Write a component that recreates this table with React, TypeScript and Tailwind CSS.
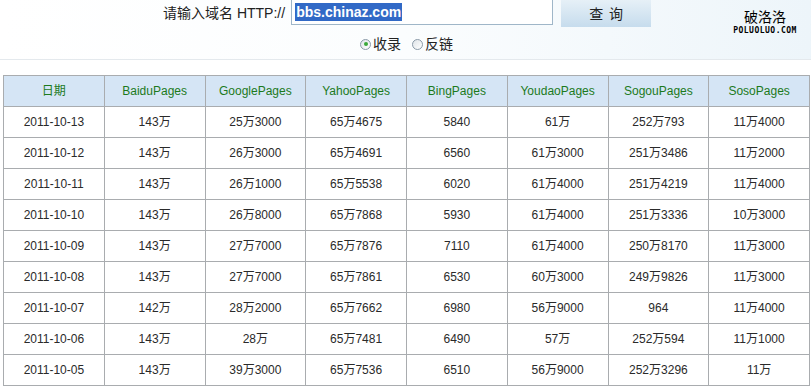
import React from "react";

const headers = ["日期", "BaiduPages", "GooglePages", "YahooPages", "BingPages", "YoudaoPages", "SogouPages", "SosoPages"];

const rows: string[][] = [
  ["2011-10-13", "143万", "25万3000", "65万4675", "5840", "61万", "252万793", "11万4000"],
  ["2011-10-12", "143万", "26万3000", "65万4691", "6560", "61万3000", "251万3486", "11万2000"],
  ["2011-10-11", "143万", "26万1000", "65万5538", "6020", "61万4000", "251万4219", "11万4000"],
  ["2011-10-10", "143万", "26万8000", "65万7868", "5930", "61万4000", "251万3336", "10万3000"],
  ["2011-10-09", "143万", "27万7000", "65万7876", "7110", "61万4000", "250万8170", "11万3000"],
  ["2011-10-08", "143万", "27万7000", "65万7861", "6530", "60万3000", "249万9826", "11万3000"],
  ["2011-10-07", "142万", "28万2000", "65万7662", "6980", "56万9000", "964", "11万4000"],
  ["2011-10-06", "143万", "28万", "65万7481", "6490", "57万", "252万594", "11万1000"],
  ["2011-10-05", "143万", "39万3000", "65万7536", "6510", "56万9000", "252万3296", "11万"],
];

const Radio = ({ checked }: { checked?: boolean }) => (
  <span className="w-[11px] h-[11px] rounded-full border border-[#8a9aa8] bg-gradient-to-br from-[#dfe4e8] to-white flex items-center justify-center">
    {checked && <span className="w-[4px] h-[4px] rounded-full bg-[#3aa83a]" />}
  </span>
);

const App = () => {
  return (
    <div
      className="w-[811px] h-[386px] bg-white overflow-hidden text-[#222]"
      style={{ fontFamily: '"Liberation Sans", "Noto Sans CJK SC", sans-serif' }}
    >
      <div className="h-[60px] border-b border-[#e4e9ed] bg-gradient-to-r from-white via-[#fbfdfe] to-[#edf5fa]">
        <div className="flex items-start">
          <span className="ml-[163px] mt-[4px] text-[14px] leading-[18px] text-[#222]">请输入域名 HTTP://</span>
          <div className="ml-[6px] w-[262px] h-[25px] border border-[#9fb6c8] border-t-0 bg-white flex items-center pl-[3px]">
            <span
              className="bg-[#3169c6] text-white font-bold text-[14px] leading-[18px] px-[1px]"
              style={{ fontFamily: '"Liberation Sans", sans-serif' }}
            >
              bbs.chinaz.com
            </span>
          </div>
          <button className="ml-[8px] w-[90px] h-[27px] bg-gradient-to-b from-[#e6f0f7] to-[#c6dced] text-[14px] leading-[18px] tracking-[6px] pl-[6px] text-[#222]">
            查询
          </button>
          <div className="ml-[82px] mt-[10px] flex flex-col items-center">
            <span className="text-[14px] leading-[15px] text-black">破洛洛</span>
            <span
              className="text-[8px] leading-[9px] font-bold tracking-[0.5px] text-black mt-[1px]"
              style={{ fontFamily: '"DejaVu Sans Mono", monospace' }}
            >
              POLUOLUO.COM
            </span>
          </div>
        </div>
        <div className="flex items-center ml-[360px] mt-[1px] text-[14px] leading-[16px] text-[#222]">
          <Radio checked />
          <span className="ml-[2px]">收录</span>
          <span className="ml-[11px]">
            <Radio />
          </span>
          <span className="ml-[2px]">反链</span>
        </div>
      </div>
      <table className="mt-[15px] ml-[3px] w-[807px] table-fixed border-collapse text-[12px]">
        <thead>
          <tr className="h-[31px] bg-[#d5e5f5]">
            {headers.map((h) => (
              <th key={h} className="border border-[#a9acaf] font-normal text-[#1c7a1c] text-center">
                {h}
              </th>
            ))}
          </tr>
        </thead>
        <tbody>
          {rows.map((r) => (
            <tr key={r[0]} className="h-[31px]">
              {r.map((c, i) => (
                <td key={i} className="border border-[#a9acaf] text-center text-[#2a2a2a]">
                  {c}
                </td>
              ))}
            </tr>
          ))}
        </tbody>
      </table>
    </div>
  );
};

export default App;
